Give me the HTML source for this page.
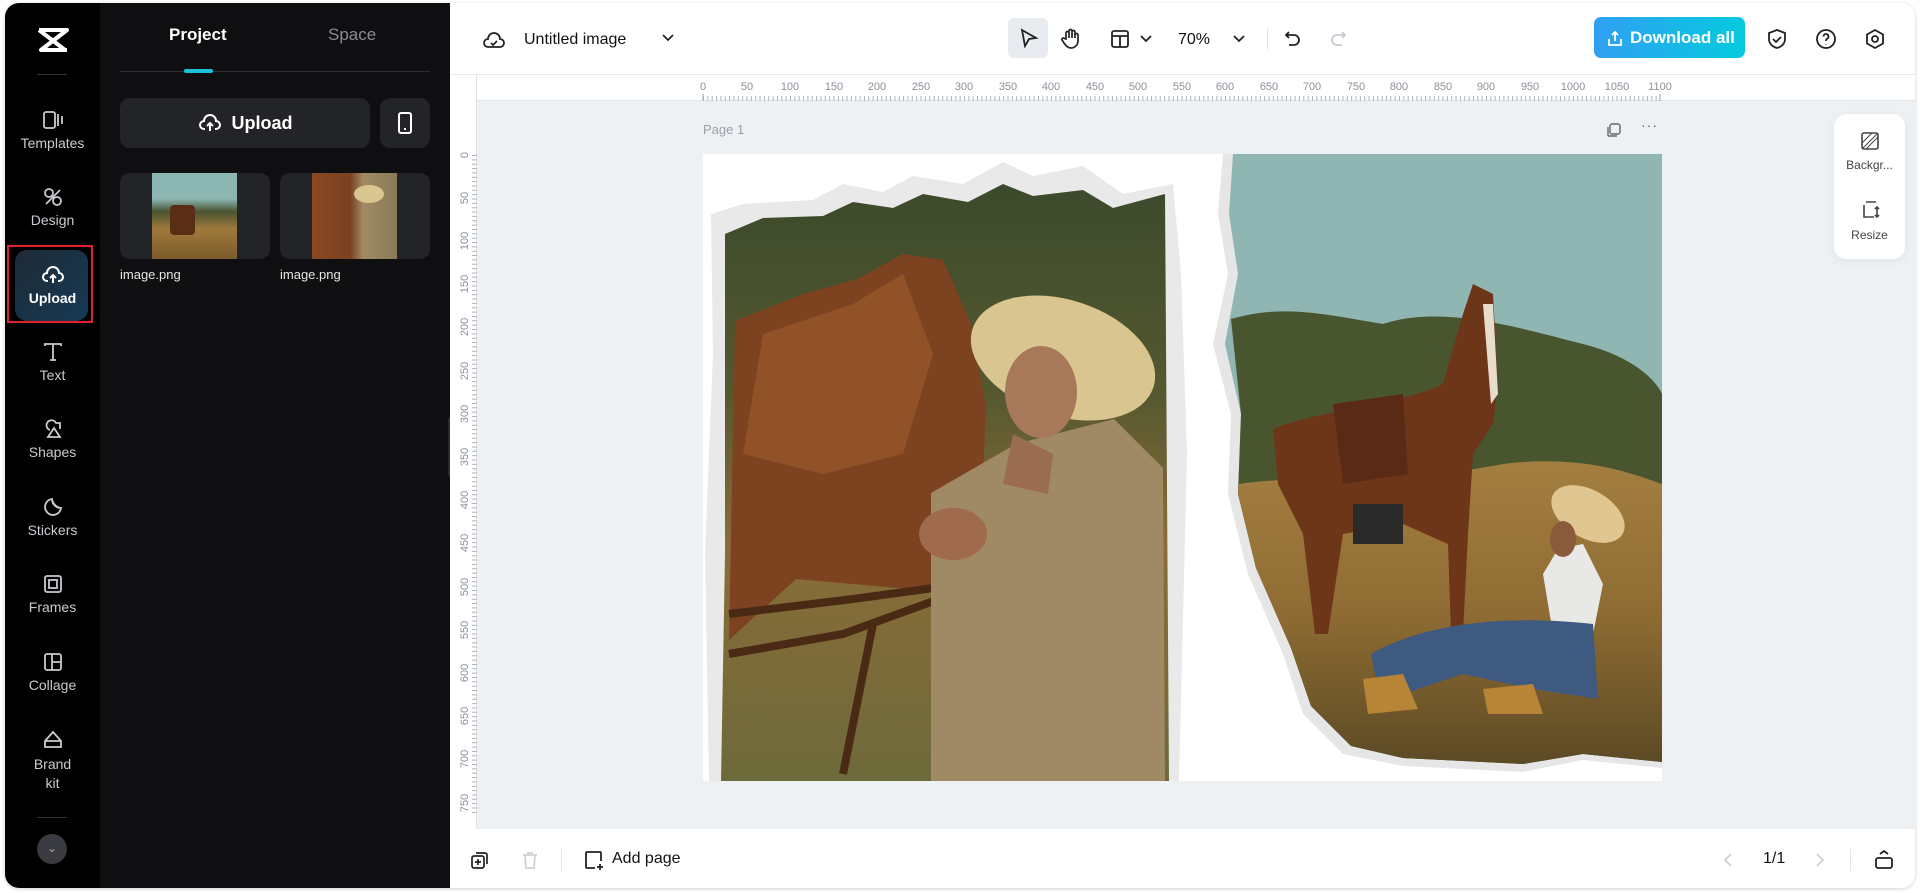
<!DOCTYPE html>
<html><head><meta charset="utf-8"><style>
*{margin:0;padding:0;box-sizing:border-box}
body{width:1920px;height:893px;background:#fff;font-family:"Liberation Sans",sans-serif;position:relative;overflow:hidden}
.abs{position:absolute}
.app{position:absolute;left:5px;top:3px;width:1910px;height:885px;border-radius:14px;overflow:hidden;background:#fff;box-shadow:0 1px 4px rgba(0,0,0,.18)}
.nav{position:absolute;left:0;top:0;width:95px;height:885px;background:#000}
.panel{position:absolute;left:95px;top:0;width:350px;height:885px;background:#0f0f11}
.ni{position:absolute;left:0;width:95px;text-align:center;color:#c9cbd0;font-size:14px}
.ni svg{display:block;margin:0 auto 4px}
.top{position:absolute;left:445px;top:0;right:0;height:72px;background:#fff;border-bottom:1px solid #e6e8eb}
.canvas{position:absolute;left:445px;top:72px;right:0;height:754px;background:#eef1f4}
.bottom{position:absolute;left:445px;top:826px;right:0;height:59px;background:#fff}
</style></head><body>
<div class="app">
 <div class="nav">
  <svg class="abs" style="left:31px;top:24px" width="34" height="26" viewBox="0 0 34 26"><path d="M3 3h28L5 23h26" stroke="#fff" stroke-width="4" fill="none" stroke-linejoin="round"/><path d="M3 3l26 20M31 3 5 23" stroke="#fff" stroke-width="4" fill="none"/></svg>
  <div class="abs" style="left:32px;top:71px;width:30px;height:1px;background:#333"></div>
  <div class="ni" style="top:106px"><svg width="22" height="22" viewBox="0 0 22 22" fill="none" stroke="#c9cbd0" stroke-width="1.8"><rect x="2" y="3" width="11" height="16" rx="2"/><path d="M16 5v12M20 7v8"/></svg>Templates</div>
  <div class="ni" style="top:183px"><svg width="22" height="22" viewBox="0 0 22 22" fill="none" stroke="#c9cbd0" stroke-width="1.8"><circle cx="7" cy="7" r="4"/><circle cx="15" cy="15" r="4"/><path d="M4 18 18 4"/></svg>Design</div>
  <div class="abs" style="left:2px;top:242px;width:86px;height:78px;border:2px solid #e0202a"></div>
  <div class="abs" style="left:10px;top:247px;width:73px;height:71px;border-radius:12px;background:linear-gradient(135deg,#1e2a36,#163a55)"></div>
  <div class="ni" style="top:261px;color:#fff;font-weight:bold"><svg width="24" height="22" viewBox="0 0 24 22" fill="none" stroke="#fff" stroke-width="2"><path d="M7 17H6a4 4 0 0 1 0-8 6 6 0 0 1 12 0 4 4 0 0 1 0 8h-1M12 19v-8M9 14l3-3 3 3"/></svg>Upload</div>
  <div class="ni" style="top:338px"><svg width="22" height="22" viewBox="0 0 22 22" fill="none" stroke="#c9cbd0" stroke-width="1.8"><path d="M3 5V3h16v2M11 3v16M8 19h6"/></svg>Text</div>
  <div class="ni" style="top:415px"><svg width="22" height="22" viewBox="0 0 22 22" fill="none" stroke="#c9cbd0" stroke-width="1.8"><path d="M8 12a5 5 0 1 1 6-7h4v6"/><path d="M12 10l6 9H6z"/></svg>Shapes</div>
  <div class="ni" style="top:493px"><svg width="22" height="22" viewBox="0 0 22 22" fill="none" stroke="#c9cbd0" stroke-width="1.8"><path d="M19 12A8 8 0 1 1 10 3c0 5 4 9 9 9zM10 3c1 5 4 8 9 9"/></svg>Stickers</div>
  <div class="ni" style="top:570px"><svg width="22" height="22" viewBox="0 0 22 22" fill="none" stroke="#c9cbd0" stroke-width="1.8"><rect x="3" y="3" width="16" height="16" rx="2"/><rect x="7" y="7" width="8" height="8"/></svg>Frames</div>
  <div class="ni" style="top:648px"><svg width="22" height="22" viewBox="0 0 22 22" fill="none" stroke="#c9cbd0" stroke-width="1.8"><rect x="3" y="3" width="16" height="16" rx="2"/><path d="M10 3v16M10 11h9"/></svg>Collage</div>
  <div class="ni" style="top:726px;line-height:19px"><svg width="22" height="22" viewBox="0 0 22 22" fill="none" stroke="#c9cbd0" stroke-width="1.8"><path d="M3 12l8-9 8 9v6H3z M3 12h16"/></svg>Brand<br>kit</div>
  <div class="abs" style="left:32px;top:814px;width:30px;height:1px;background:#333"></div>
  <div class="abs" style="left:32px;top:831px;width:30px;height:30px;border-radius:50%;background:#3a3b40;color:#aaa;text-align:center;line-height:28px;font-size:12px">&#8964;</div>
 </div>
 <div class="panel">
  <div class="abs" style="left:69px;top:22px;color:#fff;font-weight:bold;font-size:17px">Project</div>
  <div class="abs" style="left:228px;top:22px;color:#8a8d94;font-size:17px">Space</div>
  <div class="abs" style="left:20px;top:68px;width:310px;height:1px;background:#2a2b2f"></div>
  <div class="abs" style="left:84px;top:66px;width:29px;height:4px;border-radius:2px;background:#19c0dc"></div>
  <div class="abs" style="left:20px;top:95px;width:250px;height:50px;border-radius:10px;background:#232427;color:#fff;font-weight:bold;font-size:18px;text-align:center;line-height:50px"><svg style="vertical-align:-5px;margin-right:10px" width="24" height="22" viewBox="0 0 24 22" fill="none" stroke="#fff" stroke-width="2"><path d="M7 17H6a4 4 0 0 1 0-8 6 6 0 0 1 12 0 4 4 0 0 1 0 8h-1M12 19v-8M9 14l3-3 3 3"/></svg>Upload</div>
  <div class="abs" style="left:280px;top:95px;width:50px;height:50px;border-radius:10px;background:#232427"><svg style="position:absolute;left:17px;top:14px" width="16" height="22" viewBox="0 0 16 22" fill="none" stroke="#fff" stroke-width="2"><rect x="2" y="1" width="12" height="20" rx="2"/><path d="M7 17h2"/></svg></div>
  <div class="abs" style="left:20px;top:170px;width:150px;height:86px;border-radius:10px;background:#232427;overflow:hidden"><div class="abs" style="left:32px;top:0;width:85px;height:86px;background:linear-gradient(#8cb6b2 0,#8cb6b2 30%,#4a5330 45%,#a07a3c 65%,#7a5a2b)"></div><div class="abs" style="left:50px;top:32px;width:25px;height:30px;background:#5a2e16;border-radius:4px"></div></div>
  <div class="abs" style="left:180px;top:170px;width:150px;height:86px;border-radius:10px;background:#232427;overflow:hidden"><div class="abs" style="left:32px;top:0;width:85px;height:86px;background:linear-gradient(90deg,#8a4a22 0,#7a4020 45%,#a08a65 60%,#8a7a55)"></div><div class="abs" style="left:74px;top:12px;width:30px;height:18px;border-radius:50%;background:#d9c58f"></div></div>
  <div class="abs" style="left:20px;top:264px;color:#e6e6e6;font-size:13px">image.png</div>
  <div class="abs" style="left:180px;top:264px;color:#e6e6e6;font-size:13px">image.png</div>
 </div>
 <div class="abs" style="left:443px;top:413px;width:8px;height:62px;border-radius:4px;background:#2a2b2f"></div>
 <div class="top">
  <svg class="abs" style="left:32px;top:26px" width="24" height="22" viewBox="0 0 24 22" fill="none" stroke="#222" stroke-width="1.8"><path d="M7 18H6a4 4 0 0 1 0-8 6 6 0 0 1 12 0 4 4 0 0 1 0 8H7zM9 14l2 2 4-4"/></svg>
  <div class="abs" style="left:74px;top:28px;font-size:16px;color:#111">Untitled image</div>
  <svg class="abs" style="left:212px;top:31px" width="12" height="8" viewBox="0 0 12 8" fill="none" stroke="#222" stroke-width="1.8"><path d="M1 1l5 5 5-5"/></svg>
  <div class="abs" style="left:558px;top:15px;width:40px;height:40px;border-radius:6px;background:#e8ebef"></div>
  <svg class="abs" style="left:569px;top:25px" width="20" height="20" viewBox="0 0 20 20" fill="none" stroke="#222" stroke-width="1.8"><path d="M3 2l14 8-7 1-4 7z"/></svg>
  <svg class="abs" style="left:610px;top:24px" width="22" height="22" viewBox="0 0 22 22" fill="none" stroke="#222" stroke-width="1.7"><path d="M6 12V6a1.5 1.5 0 0 1 3 0v5V4a1.5 1.5 0 0 1 3 0v7V5a1.5 1.5 0 0 1 3 0v6V8a1.5 1.5 0 0 1 3 0v6a7 7 0 0 1-7 7c-3 0-5-2-7-5l-2-3a1.5 1.5 0 0 1 2.5-1.5z"/></svg>
  <svg class="abs" style="left:660px;top:26px" width="20" height="20" viewBox="0 0 20 20" fill="none" stroke="#222" stroke-width="1.8"><rect x="2" y="2" width="16" height="16" rx="2"/><path d="M2 7h16M10 7v11"/></svg>
  <svg class="abs" style="left:690px;top:32px" width="12" height="8" viewBox="0 0 12 8" fill="none" stroke="#222" stroke-width="1.8"><path d="M1 1l5 5 5-5"/></svg>
  <div class="abs" style="left:728px;top:28px;font-size:16px;color:#111">70%</div>
  <svg class="abs" style="left:783px;top:32px" width="12" height="8" viewBox="0 0 12 8" fill="none" stroke="#222" stroke-width="1.8"><path d="M1 1l5 5 5-5"/></svg>
  <div class="abs" style="left:817px;top:26px;width:1px;height:20px;background:#dde0e4"></div>
  <svg class="abs" style="left:833px;top:26px" width="20" height="20" viewBox="0 0 20 20" fill="none" stroke="#222" stroke-width="1.8"><path d="M6 3 3 6l3 3M3 6h8a5 5 0 0 1 0 10H6"/></svg>
  <svg class="abs" style="left:878px;top:26px" width="20" height="20" viewBox="0 0 20 20" fill="none" stroke="#c8ccd2" stroke-width="1.8"><path d="M14 3l3 3-3 3M17 6H9a5 5 0 0 0 0 10h5"/></svg>
  <div class="abs" style="left:1144px;top:14px;width:151px;height:41px;border-radius:7px;background:linear-gradient(90deg,#31a0f3,#05cade);color:#fff;font-weight:bold;font-size:17px;line-height:41px;padding-left:36px">Download all</div>
  <svg class="abs" style="left:1157px;top:27px" width="16" height="17" viewBox="0 0 16 17" fill="none" stroke="#fff" stroke-width="1.8"><path d="M8 11V2M5 5l3-3 3 3M2 9v6h12V9"/></svg>
  <svg class="abs" style="left:1316px;top:25px" width="22" height="22" viewBox="0 0 22 22" fill="none" stroke="#222" stroke-width="1.8"><path d="M11 2l8 3v6c0 5-4 8-8 9-4-1-8-4-8-9V5z M7 11l3 3 5-5"/></svg>
  <svg class="abs" style="left:1365px;top:25px" width="22" height="22" viewBox="0 0 22 22" fill="none" stroke="#222" stroke-width="1.8"><circle cx="11" cy="11" r="9"/><path d="M8.5 8.5a2.5 2.5 0 1 1 3.5 2.3c-.7.4-1 1-1 1.7v.5M11 16v.5"/></svg>
  <svg class="abs" style="left:1414px;top:25px" width="22" height="22" viewBox="0 0 22 22" fill="none" stroke="#222" stroke-width="1.8"><path d="M11 2l8 4.5v9L11 20l-8-4.5v-9z"/><circle cx="11" cy="11" r="3"/></svg>
 </div>
 <div class="canvas">
  <div class="abs" style="left:0;top:0;width:100%;height:26px;background:#fff;border-bottom:1px solid #dfe2e6"></div>
  <div class="abs" style="left:0;top:0;width:27px;height:100%;background:#fff;border-right:1px solid #dfe2e6"></div>
  <svg class="abs" style="left:-5px;top:0" width="1470" height="754">
   <g font-family="Liberation Sans" font-size="11" fill="#8a9099" text-anchor="middle">
    <text x="258" y="15">0</text><text x="302" y="15">50</text><text x="345" y="15">100</text><text x="389" y="15">150</text><text x="432" y="15">200</text><text x="476" y="15">250</text><text x="519" y="15">300</text><text x="563" y="15">350</text><text x="606" y="15">400</text><text x="650" y="15">450</text><text x="693" y="15">500</text><text x="737" y="15">550</text><text x="780" y="15">600</text><text x="824" y="15">650</text><text x="867" y="15">700</text><text x="911" y="15">750</text><text x="954" y="15">800</text><text x="998" y="15">850</text><text x="1041" y="15">900</text><text x="1085" y="15">950</text><text x="1128" y="15">1000</text><text x="1172" y="15">1050</text><text x="1215" y="15">1100</text>
   </g>
   <path d="M258 19v7M1215 19v7" stroke="#9aa0a8"/>
   <line x1="258" y1="23.5" x2="1215" y2="23.5" stroke="#b0b5bc" stroke-width="5" stroke-dasharray="1 3.35"/>
  </svg>
  <svg class="abs" style="left:0;top:0" width="28" height="754">
   <g font-family="Liberation Sans" font-size="11" fill="#8a9099" text-anchor="middle">
    <text transform="translate(18 80) rotate(-90)">0</text><text transform="translate(18 123) rotate(-90)">50</text><text transform="translate(18 166) rotate(-90)">100</text><text transform="translate(18 209) rotate(-90)">150</text><text transform="translate(18 252) rotate(-90)">200</text><text transform="translate(18 296) rotate(-90)">250</text><text transform="translate(18 339) rotate(-90)">300</text><text transform="translate(18 382) rotate(-90)">350</text><text transform="translate(18 425) rotate(-90)">400</text><text transform="translate(18 468) rotate(-90)">450</text><text transform="translate(18 512) rotate(-90)">500</text><text transform="translate(18 555) rotate(-90)">550</text><text transform="translate(18 598) rotate(-90)">600</text><text transform="translate(18 641) rotate(-90)">650</text><text transform="translate(18 684) rotate(-90)">700</text><text transform="translate(18 728) rotate(-90)">750</text>
   </g>
   <line x1="24.5" y1="80" x2="24.5" y2="740" stroke="#b0b5bc" stroke-width="5" stroke-dasharray="1 3.35"/>
  </svg>
  <div class="abs" style="left:253px;top:47px;font-size:13px;color:#9aa0a8">Page 1</div>
  <svg class="abs" style="left:1156px;top:47px" width="16" height="16" viewBox="0 0 16 16" fill="none" stroke="#666" stroke-width="1.4"><rect x="4" y="2" width="10" height="10" rx="2"/><path d="M2 5v8a1 1 0 0 0 1 1h8"/></svg>
  <div class="abs" style="left:1191px;top:42px;font-size:14px;color:#666;letter-spacing:1px">···</div>
  <div class="abs" style="left:253px;top:79px;width:959px;height:627px;background:#fff;overflow:hidden">
   <svg width="959" height="627" viewBox="0 0 959 627">
    <defs>
     <linearGradient id="lb" x1="0" y1="0" x2="0" y2="1"><stop offset="0" stop-color="#3b4a2c"/><stop offset=".35" stop-color="#55582f"/><stop offset=".6" stop-color="#8a6c38"/><stop offset="1" stop-color="#6d6a3a"/></linearGradient>
     <linearGradient id="rg" x1="0" y1="0" x2="0" y2="1"><stop offset="0" stop-color="#a37e40"/><stop offset=".5" stop-color="#8f6c33"/><stop offset="1" stop-color="#5c4a25"/></linearGradient>
    </defs>
    <path d="M8 60 L40 50 L110 46 L140 30 L180 38 L210 22 L260 30 L300 8 L330 22 L380 12 L420 40 L470 30 L478 120 L484 300 L476 627 L6 627 L2 400 L10 200 Z" fill="#e9e9e9"/>
    <path d="M22 80 L60 64 L120 62 L150 48 L190 54 L220 40 L265 48 L300 30 L330 42 L380 36 L410 54 L462 40 L466 627 L18 627 L22 400 Z" fill="url(#lb)"/>
    <path d="M32 167 L100 140 L154 125 L200 100 L240 106 L268 170 L283 253 L277 400 L228 437 L150 430 L93 425 L26 486 Z" fill="#7d4220"/>
    <path d="M60 180 L150 150 L200 120 L230 200 L200 300 L120 320 L40 300 Z" fill="#9a5a2c" opacity=".7"/>
    <path d="M26 460 L150 445 L260 430 M26 500 L140 480 L250 440 M170 470 L140 620" stroke="#4a2a14" stroke-width="8" fill="none"/>
    <path d="M228 339 L313 290 L411 265 L460 314 L462 627 L228 627 Z" fill="#a08a65"/>
    <ellipse cx="360" cy="204" rx="95" ry="58" fill="#d9c58f" transform="rotate(18 360 204)"/>
    <ellipse cx="338" cy="238" rx="36" ry="46" fill="#a8785a"/>
    <path d="M310 280 L350 300 L345 340 L300 330 Z" fill="#9a6c50"/>
    <ellipse cx="250" cy="380" rx="34" ry="26" fill="#a06a4c"/>
    <path d="M520 0 L959 0 L959 614 L880 606 L820 618 L700 612 L640 600 L600 560 L580 500 L545 420 L525 340 L528 260 L510 190 L525 120 L515 60 Z" fill="#e6e6e6"/>
    <path d="M530 0 L959 0 L959 608 L880 600 L820 610 L700 604 L648 592 L608 552 L588 494 L553 414 L535 340 L538 260 L522 190 L535 120 L526 60 Z" fill="#8fb6b2"/>
    <path d="M528 165 C580 150 620 160 680 170 C740 150 820 175 880 190 C920 200 950 220 959 240 L959 608 L880 600 L820 610 L700 604 L648 592 L608 552 L588 494 L553 414 L535 340 L538 260 Z" fill="#48552f"/>
    <path d="M536 330 C600 320 700 330 800 310 C880 300 930 320 959 330 L959 608 L880 600 L820 610 L700 604 L648 592 L608 552 L588 494 L553 414 L535 340 Z" fill="url(#rg)"/>
    <path d="M570 275 C620 255 700 250 740 230 L760 160 L770 130 L790 140 L795 230 L790 270 L770 300 L765 380 L760 480 L748 480 L745 390 L700 370 L640 380 L625 480 L612 480 L600 380 L575 330 Z" fill="#6e3619"/>
    <path d="M780 150 L790 150 L795 240 L788 250 Z" fill="#e8dccb"/>
    <path d="M630 250 L700 240 L705 320 L640 330 Z" fill="#5a2a16"/>
    <path d="M650 350 L700 350 L700 390 L650 390 Z" fill="#2a2a2a"/>
    <path d="M855 395 L880 390 L900 430 L890 480 L850 480 L840 420 Z" fill="#e8e8e6"/>
    <ellipse cx="885" cy="360" rx="40" ry="24" fill="#e0c690" transform="rotate(30 885 360)"/>
    <ellipse cx="860" cy="385" rx="13" ry="18" fill="#8a5a3c"/>
    <path d="M668 500 C720 470 800 460 890 470 L895 545 L830 535 L760 520 L700 540 L675 535 Z" fill="#3f5a80"/>
    <path d="M660 525 L700 520 L715 555 L665 560 Z M780 535 L830 530 L840 560 L785 560 Z" fill="#b88436"/>
   </svg>
  </div>
  <div class="abs" style="left:1384px;top:39px;width:71px;height:145px;border-radius:12px;background:#fff;box-shadow:0 2px 10px rgba(0,0,0,.06)">
   <svg class="abs" style="left:26px;top:17px" width="20" height="20" viewBox="0 0 20 20" fill="none" stroke="#444" stroke-width="1.6"><rect x="2" y="2" width="16" height="16" rx="2"/><path d="M2 12 12 2M6 18 18 6M2 18 18 2" stroke-width="1"/></svg>
   <div class="abs" style="left:0;width:71px;top:44px;text-align:center;font-size:12px;color:#444">Backgr...</div>
   <svg class="abs" style="left:26px;top:85px" width="20" height="20" viewBox="0 0 20 20" fill="none" stroke="#444" stroke-width="1.6"><path d="M4 6v12h10M6 3h10M17 8v10M15 10l2-2 2 2M15 16l2 2 2-2"/></svg>
   <div class="abs" style="left:0;width:71px;top:114px;text-align:center;font-size:12px;color:#444">Resize</div>
  </div>
 </div>
 <div class="bottom">
  <svg class="abs" style="left:20px;top:21px" width="20" height="20" viewBox="0 0 20 20" fill="none" stroke="#222" stroke-width="1.7"><rect x="2" y="6" width="12" height="12" rx="2"/><path d="M6 3h9a2 2 0 0 1 2 2v9M8 9v6M5 12h6"/></svg>
  <svg class="abs" style="left:70px;top:21px" width="20" height="20" viewBox="0 0 20 20" fill="none" stroke="#cdd1d6" stroke-width="1.7"><path d="M3 5h14M8 5V3h4v2M5 5l1 13h8l1-13"/></svg>
  <div class="abs" style="left:111px;top:20px;width:1px;height:22px;background:#e3e5e8"></div>
  <svg class="abs" style="left:133px;top:20px" width="22" height="22" viewBox="0 0 22 22" fill="none" stroke="#222" stroke-width="1.8"><path d="M12 19H4a1 1 0 0 1-1-1V4a1 1 0 0 1 1-1h13a1 1 0 0 1 1 1v8M17 15v6M14 18h6"/></svg>
  <div class="abs" style="left:162px;top:21px;font-size:16px;color:#111">Add page</div>
  <svg class="abs" style="left:1273px;top:23px" width="10" height="16" viewBox="0 0 10 16" fill="none" stroke="#c8ccd2" stroke-width="1.6"><path d="M8 2 2 8l6 6"/></svg>
  <div class="abs" style="left:1313px;top:21px;font-size:16px;color:#111">1/1</div>
  <svg class="abs" style="left:1365px;top:23px" width="10" height="16" viewBox="0 0 10 16" fill="none" stroke="#c8ccd2" stroke-width="1.6"><path d="M2 2l6 6-6 6"/></svg>
  <div class="abs" style="left:1400px;top:20px;width:1px;height:22px;background:#e3e5e8"></div>
  <svg class="abs" style="left:1423px;top:19px" width="22" height="22" viewBox="0 0 22 22" fill="none" stroke="#222" stroke-width="1.8"><rect x="3" y="10" width="16" height="10" rx="2"/><path d="M7 6l4-3 4 3"/></svg>
 </div>
</div>
</body></html>
